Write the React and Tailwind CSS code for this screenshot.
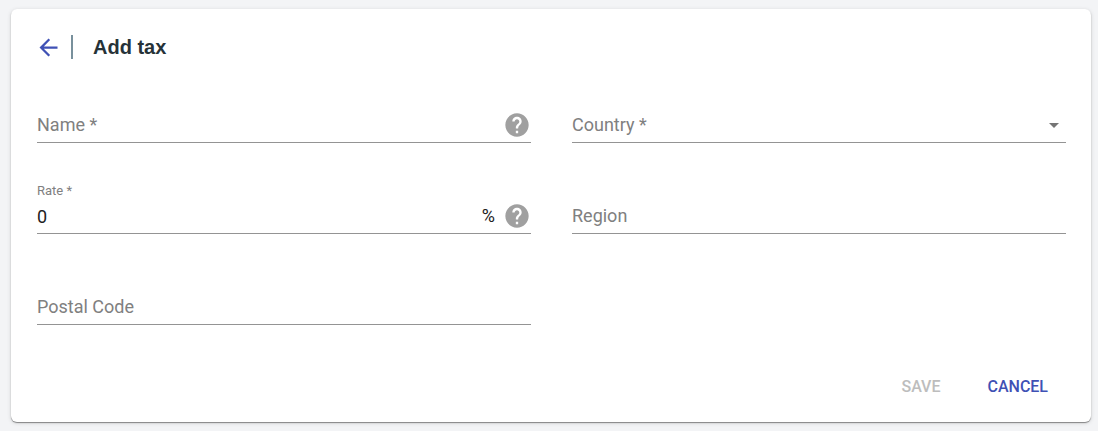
import { useState } from 'react'
import { MdArrowBack, MdArrowDropDown, MdHelp } from 'react-icons/md'

function Field({ id, label, value, required, children, suffix }) {
  const floated = value !== ''

  return (
    <div className="relative flex items-center border-b border-[#949494] pt-4">
      <label
        htmlFor={id}
        className={
          floated
            ? 'pointer-events-none absolute left-0 top-0 text-[13px] leading-4 text-[#808080]'
            : 'pointer-events-none absolute left-0 top-4 text-lg leading-[34px] text-[#808080]'
        }
      >
        {label}
        {required && ' *'}
      </label>
      {children}
      {suffix}
    </div>
  )
}

function TextField({ id, label, value, onChange, required, unit, help }) {
  return (
    <Field
      id={id}
      label={label}
      value={value}
      required={required}
      suffix={
        <>
          {unit && <span className="mr-2 text-lg leading-7 text-[#212121]">{unit}</span>}
          {help && (
            <button type="button" aria-label={`Help for ${label}`} title={help} className="text-[#a0a0a0]">
              <MdHelp className="h-7 w-7" />
            </button>
          )}
        </>
      }
    >
      <input
        id={id}
        type="text"
        required={required}
        value={value}
        onChange={(e) => onChange(e.target.value)}
        className="h-[34px] w-full min-w-0 flex-1 bg-transparent text-lg text-[#212121] outline-none"
      />
    </Field>
  )
}

export default function App() {
  const [tax, setTax] = useState({ name: '', country: '', rate: '0', region: '', postalCode: '' })

  function update(key) {
    return (value) => setTax((prev) => ({ ...prev, [key]: value }))
  }

  const canSave = tax.name !== '' && tax.country !== '' && tax.rate !== ''

  return (
    <div className="min-h-screen bg-[#f3f4f6] pb-[9px] pl-[11px] pr-[7px] pt-[9px] font-[Roboto,sans-serif]">
      <form
        onSubmit={(e) => e.preventDefault()}
        className="rounded-md bg-white pb-[15px] pt-[26px] shadow-[0_1px_1px_rgba(0,0,0,0.4),0_1px_4px_rgba(0,0,0,0.15)]"
      >
        <header className="flex h-6 items-center pl-6">
          <button type="button" aria-label="Back" className="text-[#3f51b5]">
            <MdArrowBack className="h-[27px] w-[27px]" />
          </button>
          <div className="ml-[9px] h-6 w-0.5 bg-[#78909c]" />
          <h1 className="ml-5 font-['Liberation_Sans',Arial,sans-serif] text-xl font-bold text-[#263238]">Add tax</h1>
        </header>

        <div className="mt-[33px] grid grid-cols-2 gap-x-[41px] gap-y-10 pl-[26px] pr-[25px]">
          <TextField
            id="name"
            label="Name"
            required
            value={tax.name}
            onChange={update('name')}
            help="Name shown to customers"
          />
          <Field
            id="country"
            label="Country"
            required
            value={tax.country}
            suffix={<MdArrowDropDown className="pointer-events-none absolute right-0 h-6 w-6 text-[#757575]" />}
          >
            <select
              id="country"
              required
              value={tax.country}
              onChange={(e) => update('country')(e.target.value)}
              className="h-[34px] w-full appearance-none bg-transparent text-lg text-[#212121] outline-none"
            >
              <option value="" />
              <option value="DE">Germany</option>
              <option value="FR">France</option>
              <option value="US">United States</option>
            </select>
          </Field>
          <TextField
            id="rate"
            label="Rate"
            required
            value={tax.rate}
            onChange={update('rate')}
            unit="%"
            help="Percentage added to the price"
          />
          <TextField id="region" label="Region" value={tax.region} onChange={update('region')} />
          <TextField id="postal-code" label="Postal Code" value={tax.postalCode} onChange={update('postalCode')} />
        </div>

        <div className="mt-[42px] flex justify-end gap-[11px] pr-[25px]">
          <button
            type="submit"
            disabled={!canSave}
            className="h-10 px-[18px] text-base font-medium text-[#3f51b5] disabled:text-[#bdbdbd]"
          >
            SAVE
          </button>
          <button type="button" className="h-10 px-[18px] text-base font-medium text-[#3f51b5]">
            CANCEL
          </button>
        </div>
      </form>
    </div>
  )
}
